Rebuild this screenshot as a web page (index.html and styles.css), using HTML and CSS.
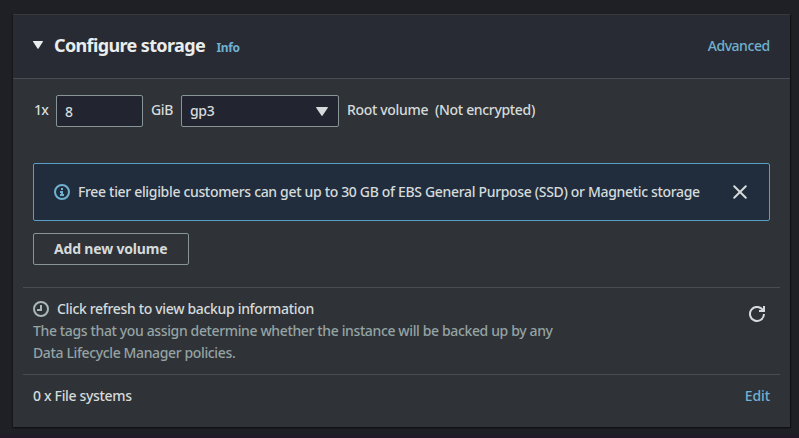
FILE: index.html
```html
<!DOCTYPE html>
<html lang="en">
<head>
<meta charset="utf-8">
<title>Configure storage</title>
<link rel="stylesheet" href="styles.css">
</head>
<body>
<section class="panel">
  <header class="header">
    <svg class="caret" width="10" height="8" viewBox="0 0 10 8"><path d="M.5 0h9q.7 0 .4.7L5.5 7.6q-.5.6-1 0L.1.7Q-.2 0 .5 0z" fill="currentColor"/></svg>
    <h2 class="title">Configure storage</h2>
    <a class="info">Info</a>
    <a class="link advanced">Advanced</a>
  </header>
  <div class="volume">
    <span class="count">1x</span>
    <div class="field size"><span>8</span></div>
    <span class="unit">GiB</span>
    <div class="field type"><span class="type-name">gp3</span><svg class="arrow" width="12" height="9" viewBox="0 0 10 8" preserveAspectRatio="none"><path d="M.5 0h9q.7 0 .4.7L5.5 7.6q-.5.6-1 0L.1.7Q-.2 0 .5 0z" fill="currentColor"/></svg></div>
    <span class="root">Root volume</span>
    <span class="encrypted">(Not encrypted)</span>
  </div>
  <div class="alert">
    <svg class="alert-icon" width="16" height="16" viewBox="0 0 16 16" fill="none" stroke="currentColor" stroke-width="2"><circle cx="8" cy="8" r="7"/><path d="M8 11V8H6M6 11h4M7 5h2"/></svg>
    <span class="alert-text">Free tier eligible customers can get up to 30 GB of EBS General Purpose (SSD) or Magnetic storage</span>
    <svg class="close" width="16" height="16" viewBox="0 0 16 16" fill="none" stroke="currentColor" stroke-width="2" stroke-linecap="round"><path d="M2.2 2.2l11.6 11.6M13.8 2.2L2.2 13.8"/></svg>
  </div>
  <button class="add"><span>Add new volume</span></button>
  <div class="backup">
    <div class="backup-main">
      <div class="backup-title"><svg width="16" height="16" viewBox="0 0 16 16" fill="none" stroke="currentColor" stroke-width="2"><circle cx="8" cy="8" r="7"/><path d="M8 4v5H4"/></svg><span class="backup-heading">Click refresh to view backup information</span></div>
      <div class="note"><span class="note-one">The tags that you assign determine whether the instance will be backed up by any</span><br><span class="note-two">Data Lifecycle Manager policies.</span></div>
    </div>
    <svg class="refresh" width="16" height="16" viewBox="0 0 16 16" fill="none" stroke="currentColor" stroke-width="2"><path d="M15 8a7 7 0 1 1-.9-3.5M10 5h5V0"/></svg>
  </div>
  <footer class="files">
    <span class="files-label">0 x File systems</span>
    <a class="link edit">Edit</a>
  </footer>
</section>
</body>
</html>
```
FILE: styles.css
```css
* { box-sizing: border-box; }
body {
  margin: 0;
  height: 438px;
  padding: 14px 9px 0 13px;
  overflow: hidden;
  background: linear-gradient(#1f2026 434px, #211a27 434px);
  color: #d5dbdb;
  font: 500 14px/22px "Noto Sans", "Open Sans", sans-serif;
  letter-spacing: -.33px;
  white-space: nowrap;
}
.panel {
  height: 413px;
  background: #2f3237;
  border-top: 1px solid #36383c;
  box-shadow: 0 1px 1px #111216, 1px 1px 1px #111216, -1px 1px 1px #17181c;
}
.header {
  display: flex;
  align-items: center;
  height: 64px;
  padding: 0 20px;
  background: #282b33;
  border-bottom: 1px solid #474b52;
}
.caret { margin: -3px 11px 0 0; color: #eaeded; }
.title { margin: 0; padding-bottom: 3px; width: 162.5px; font-size: 18px; font-weight: 700; color: #eaeded; letter-spacing: -.63px; }
.info { font-size: 12px; font-weight: 700; color: #6fb1d0; padding-top: 3px; letter-spacing: -.4px; }
.link { margin-left: auto; color: #6fb1d0; }
.advanced { padding-bottom: 2px; letter-spacing: -.45px; margin-right: .3px; }
.edit { letter-spacing: -.1px; }
.volume { display: flex; align-items: center; height: 32px; margin: 16px 20px 0 21px; }
.volume > * { flex: none; }
.count, .unit, .root, .encrypted { padding-bottom: 2px; }
.count { width: 22px; letter-spacing: -.7px; }
.field { display: flex; align-items: center; height: 32px; padding: 2px 8px 0; background: #22252f; border: 1px solid #879596; border-radius: 2px; }
.size { width: 87px; }
.unit { width: 38px; padding-left: 8px; }
.type { width: 158px; justify-content: space-between; padding: 0 10px 0 8px; }
.root { width: 88px; margin-left: 8px; }
.alert {
  display: flex;
  align-items: center;
  height: 58px;
  margin: 36px 20px 0;
  padding: 0 21px 0 20px;
  background: #212d3d;
  border: 1px solid #569fc6;
  border-radius: 2px;
}
.alert-icon { margin-right: 8px; color: #6fb1d0; }
.close { margin-left: auto; }
.add { display: block; width: 156px; height: 32px; margin: 12px 20px 22px; padding: 0 0 0 20px; background: transparent; border: 1px solid #879596; border-radius: 2px; color: inherit; font: inherit; font-weight: 700; letter-spacing: -.17px; text-align: left; }
.backup { display: flex; justify-content: space-between; height: 87px; margin: 0 10px; padding: 10px 15px 0 10px; border-top: 1px solid #494d51; }
.backup-title { display: flex; align-items: center; gap: 8px; height: 22px; }
.backup-title svg { color: #aab7b8; }
.note { color: #95a3a3; letter-spacing: -.37px; }
.refresh { margin-top: 8px; }
.files { display: flex; margin: 0 10px; padding: 10px 10px 0; border-top: 1px solid #494d51; }
```
